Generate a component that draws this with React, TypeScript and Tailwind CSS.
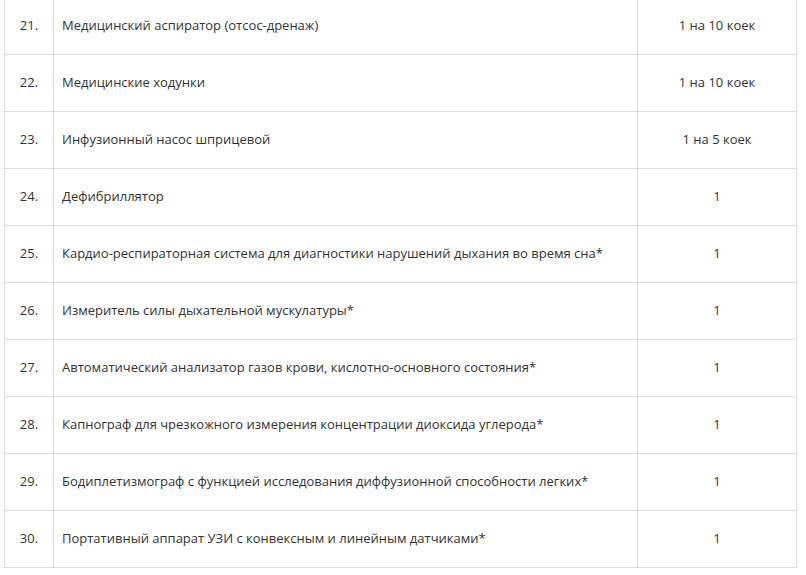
import React from "react";

const rows: [string, string, string][] = [
  ["21.", "Медицинский аспиратор (отсос-дренаж)", "1 на 10 коек"],
  ["22.", "Медицинские ходунки", "1 на 10 коек"],
  ["23.", "Инфузионный насос шприцевой", "1 на 5 коек"],
  ["24.", "Дефибриллятор", "1"],
  ["25.", "Кардио-респираторная система для диагностики нарушений дыхания во время сна*", "1"],
  ["26.", "Измеритель силы дыхательной мускулатуры*", "1"],
  ["27.", "Автоматический анализатор газов крови, кислотно-основного состояния*", "1"],
  ["28.", "Капнограф для чрезкожного измерения концентрации диоксида углерода*", "1"],
  ["29.", "Бодиплетизмограф с функцией исследования диффузионной способности легких*", "1"],
  ["30.", "Портативный аппарат УЗИ с конвексным и линейным датчиками*", "1"],
];

export default function App() {
  return (
    <div className="w-[806px] h-[575px] bg-white overflow-hidden" style={{ fontFamily: '"Open Sans", sans-serif' }}>
      <table className="ml-[4px] -mt-[3px] border-collapse text-[13px] text-[#333] w-[792px] table-fixed">
        <colgroup>
          <col className="w-[49px]" />
          <col className="w-[584px]" />
          <col className="w-[159px]" />
        </colgroup>
        <tbody>
          {rows.map((r) => (
            <tr key={r[0]} className="h-[57px]">
              <td className="border border-[#dcdcdc] text-center align-middle p-0">{r[0]}</td>
              <td className="border border-[#dcdcdc] align-middle pl-[8px] pr-2">{r[1]}</td>
              <td className="border border-[#dcdcdc] text-center align-middle p-0">{r[2]}</td>
            </tr>
          ))}
        </tbody>
      </table>
    </div>
  );
}
